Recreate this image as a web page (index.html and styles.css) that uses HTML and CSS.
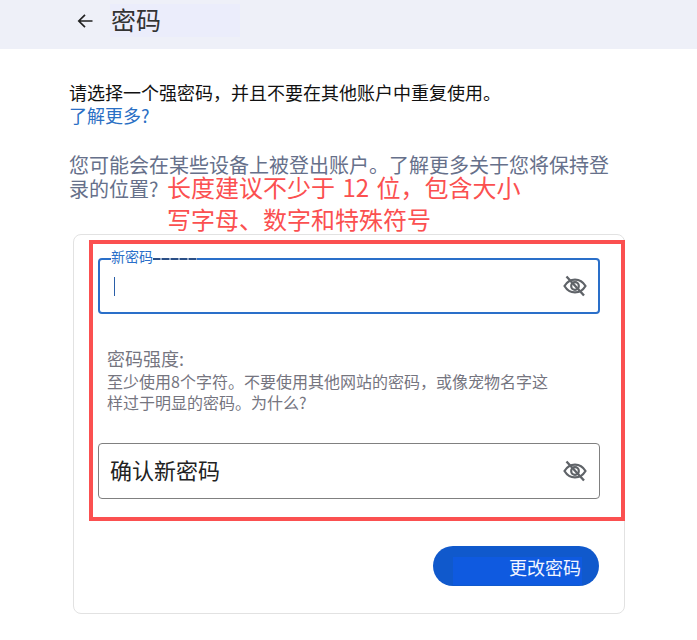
FILE: index.html
```html
<!DOCTYPE html>
<html lang="zh-CN">
<head>
<meta charset="utf-8">
<title>密码</title>
<link rel="stylesheet" href="styles.css">
</head>
<body>
<svg class="defs" width="0" height="0" aria-hidden="true">
  <symbol id="eye-off" viewBox="0 0 24 24">
    <path fill="none" stroke="currentColor" stroke-width="2.200" d="M1.500 12C4 7.800 7.800 5.600 12 5.600s8 2.200 10.500 6.400c-2.500 4.200-6.300 6.400-10.500 6.400S4 16.200 1.500 12Z"/>
    <circle cx="12" cy="12" r="3.800" fill="none" stroke="currentColor" stroke-width="2.200"/>
    <path fill="none" stroke="currentColor" stroke-width="2.400" d="M3.500 2.500 21 21.500"/>
  </symbol>
</svg>
<header class="topbar">
  <svg class="back" viewBox="0 0 16 16" width="16" height="16" aria-hidden="true"><path fill="none" stroke="currentColor" stroke-width="1.700" d="M15.500 8H1.800M8 1.800 1.800 8 8 14.200"/></svg>
  <h1 class="title">密码</h1>
</header>
<main class="content">
  <p class="lead">请选择一个强密码，并且不要在其他账户中重复使用。</p>
  <a class="more" href="#">了解更多?</a>
  <p class="notice">您可能会在某些设备上被登出账户。了解更多关于您将保持登录的位置?</p>
  <div class="annotation">长度建议不少于 12 位，包含大小<br>写字母、数字和特殊符号</div>
  <section class="card">
    <div class="field field-active">
      <span class="float-label">新密码</span>
      <span class="caret"></span>
      <svg class="eye"><use href="#eye-off"/></svg>
    </div>
    <div class="strength">
      <div class="strength-title">密码强度:</div>
      <p class="strength-text">至少使用8个字符。不要使用其他网站的密码，或像宠物名字这样过于明显的密码。为什么?</p>
    </div>
    <div class="field">
      <span class="placeholder">确认新密码</span>
      <svg class="eye"><use href="#eye-off"/></svg>
    </div>
    <div class="actions"><button class="submit" type="button">更改密码</button></div>
    <div class="highlight"></div>
  </section>
</main>
</body>
</html>
```
FILE: styles.css
```css
* { box-sizing: border-box; }
html, body { margin: 0; height: 640px; overflow: hidden; }
body {
  background: #fff;
  font-family: "Noto Sans CJK SC", "Noto Sans", sans-serif;
  color: #111;
}
.defs { position: absolute; }
.topbar {
  height: 49px;
  background: #eef0f8;
  display: flex;
  align-items: center;
  padding: 0 0 9px 77px;
  gap: 17px;
  color: #222;
}
.back { flex: none; margin-top: 2px; }
.title {
  margin: 0;
  width: 130px;
  height: 33px;
  padding-left: 1px;
  background: #ebedfb;
  font-size: 25px;
  font-weight: 400;
  line-height: 30px;
  color: #333;
}
.content { position: relative; padding: 31px 0 0 69px; }
.lead { margin: 0; font-size: 18px; line-height: 24px; color: #111; }
.more { display: block; font-size: 18px; line-height: 22px; color: #2a6fc4; text-decoration: none; }
.notice { margin: 27px 0 0; width: 542px; font-size: 20px; line-height: 24px; color: #66708a; }
.annotation {
  position: absolute;
  left: 167px;
  top: 122px;
  font-size: 24px;
  line-height: 32px;
  word-spacing: 2px;
  color: #fb5050;
  white-space: nowrap;
}
.card {
  position: relative;
  margin: 33px 0 0 4px;
  width: 552px;
  height: 380px;
  border: 1px solid #e2e2e2;
  border-radius: 8px;
  padding: 23px 24px 0;
}
.field {
  position: relative;
  height: 56px;
  border: 1px solid #808080;
  border-radius: 4px;
  display: flex;
  align-items: center;
  justify-content: space-between;
  padding: 0 12px 0 11px;
}
.field-active { border: 2px solid #2a6fc9; padding: 0 11px 0 14px; }
.float-label {
  position: absolute;
  left: 11px;
  top: -14px;
  font-size: 14px;
  line-height: 20px;
  color: #2a6fc9;
  background: linear-gradient(transparent 0 25%, #fff 25% 90%, transparent 90%);
}
.float-label::after {
  content: "";
  position: absolute;
  left: 42px;
  top: 12px;
  width: 44px;
  height: 2px;
  background: repeating-linear-gradient(90deg, #2b4f86 0 7px, #8fa6c8 7px 9px);
}
.caret { width: 1px; height: 19px; background: #2a5fa8; }
.placeholder { margin-bottom: 4px; font-size: 22px; line-height: 30px; color: #222; }
.eye { width: 24px; height: 24px; color: #5f6368; margin-left: auto; }
.strength { padding: 31px 9px 0; height: 129px; }
.strength-title { font-size: 18px; line-height: 26px; color: #75757f; }
.strength-text { margin: 0; width: 445px; font-size: 16px; line-height: 21px; color: #75757f; }
.actions { display: flex; justify-content: flex-end; margin-top: 47px; }
.submit {
  width: 166px;
  height: 40px;
  margin-right: 1px;
  border: 0;
  border-radius: 20px;
  padding: 2px 18px 0 0;
  background: linear-gradient(#0f5ae0, #0f5ae0) no-repeat 20px 11px / 129px 28px, #1059cc;
  color: #f2f5ff;
  font: 18px "Noto Sans CJK SC", sans-serif;
  text-align: right;
}
.highlight {
  position: absolute;
  left: 15px;
  top: 5px;
  width: 536px;
  height: 281px;
  border: 4px solid #fb5050;
  pointer-events: none;
}
```
